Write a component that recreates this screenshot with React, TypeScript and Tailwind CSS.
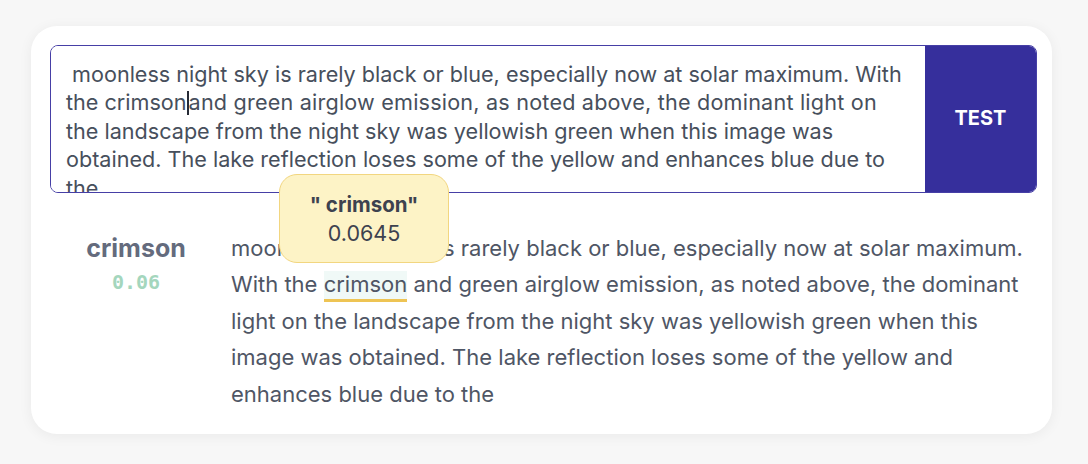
import React from "react";

export default function App() {
  return (
    <div className="w-[1088px] h-[464px] bg-[#f7f7f7] pt-[26px] pl-[31px] overflow-hidden" style={{ fontFamily: "Inter, 'Noto Sans', sans-serif" }}>
      <div className="w-[1021px] h-[408px] bg-white rounded-[26px] shadow-[0_2px_14px_rgba(0,0,0,0.06)] pt-[19px] pl-[19px] pr-[15px] relative">
        <div className="flex h-[148px] border-[1.5px] border-[#463fa6] rounded-[8px] overflow-hidden">
          <div className="flex-1 bg-white pl-[15px] pr-[4px] pt-[14px] text-[21.6px] leading-[28.4px] text-[#474f5c] overflow-hidden whitespace-nowrap">
            <div>&nbsp;moonless night sky is rarely black or blue, especially now at solar maximum. With</div>
            <div>
              the crimson
              <span className="inline-block w-[2px] h-[24px] bg-[#262b36] align-[-5px]"></span>
              <span className="tracking-[0.2px]">and green airglow emission, as noted above, the dominant light on</span>
            </div>
            <div>the landscape from the night sky was yellowish green when this image was</div>
            <div>obtained. The lake reflection loses some of the yellow and enhances blue due to</div>
            <div>the</div>
          </div>
          <div className="w-[111px] bg-[#362f9c] flex items-center justify-center text-white font-bold text-[20px] pb-[2px]">
            TEST
          </div>
        </div>

        <div className="flex mt-[37px]">
          <div className="w-[172px] flex flex-col items-center">
            <div className="text-[25px] font-bold text-[#646b7d] leading-[36px]">crimson</div>
            <div className="text-[20px] text-[#a4d6bd] leading-[28px] mt-[2px] font-semibold" style={{ fontFamily: "'DejaVu Sans Mono', 'Liberation Mono', monospace" }}>0.06</div>
          </div>
          <div className="flex-1 pl-[9px] text-[22px] leading-[36.4px] text-[#4f5665] pr-[6px]">
            moonless night sky is rarely black or blue, especially now at solar maximum. With the{" "}
            <span className="bg-[#f0f9f7] border-b-[3px] border-[#eec454] pb-[2px]">crimson</span>{" "}
            and green airglow emission, as noted above, the dominant light on the landscape from the night sky was yellowish green when this image was obtained. The lake reflection loses some of the yellow and enhances blue due to the
          </div>
        </div>

        <div className="absolute left-[248px] top-[148px] w-[170px] h-[89px] bg-[#fdf3c6] border-[1.5px] border-[#f2d680] rounded-[18px] flex flex-col items-center justify-center text-[#3d424f]">
          <div className="text-[20.5px] font-bold leading-[29px]">" crimson"</div>
          <div className="text-[21.5px] leading-[29px]">0.0645</div>
        </div>
      </div>
    </div>
  );
}
